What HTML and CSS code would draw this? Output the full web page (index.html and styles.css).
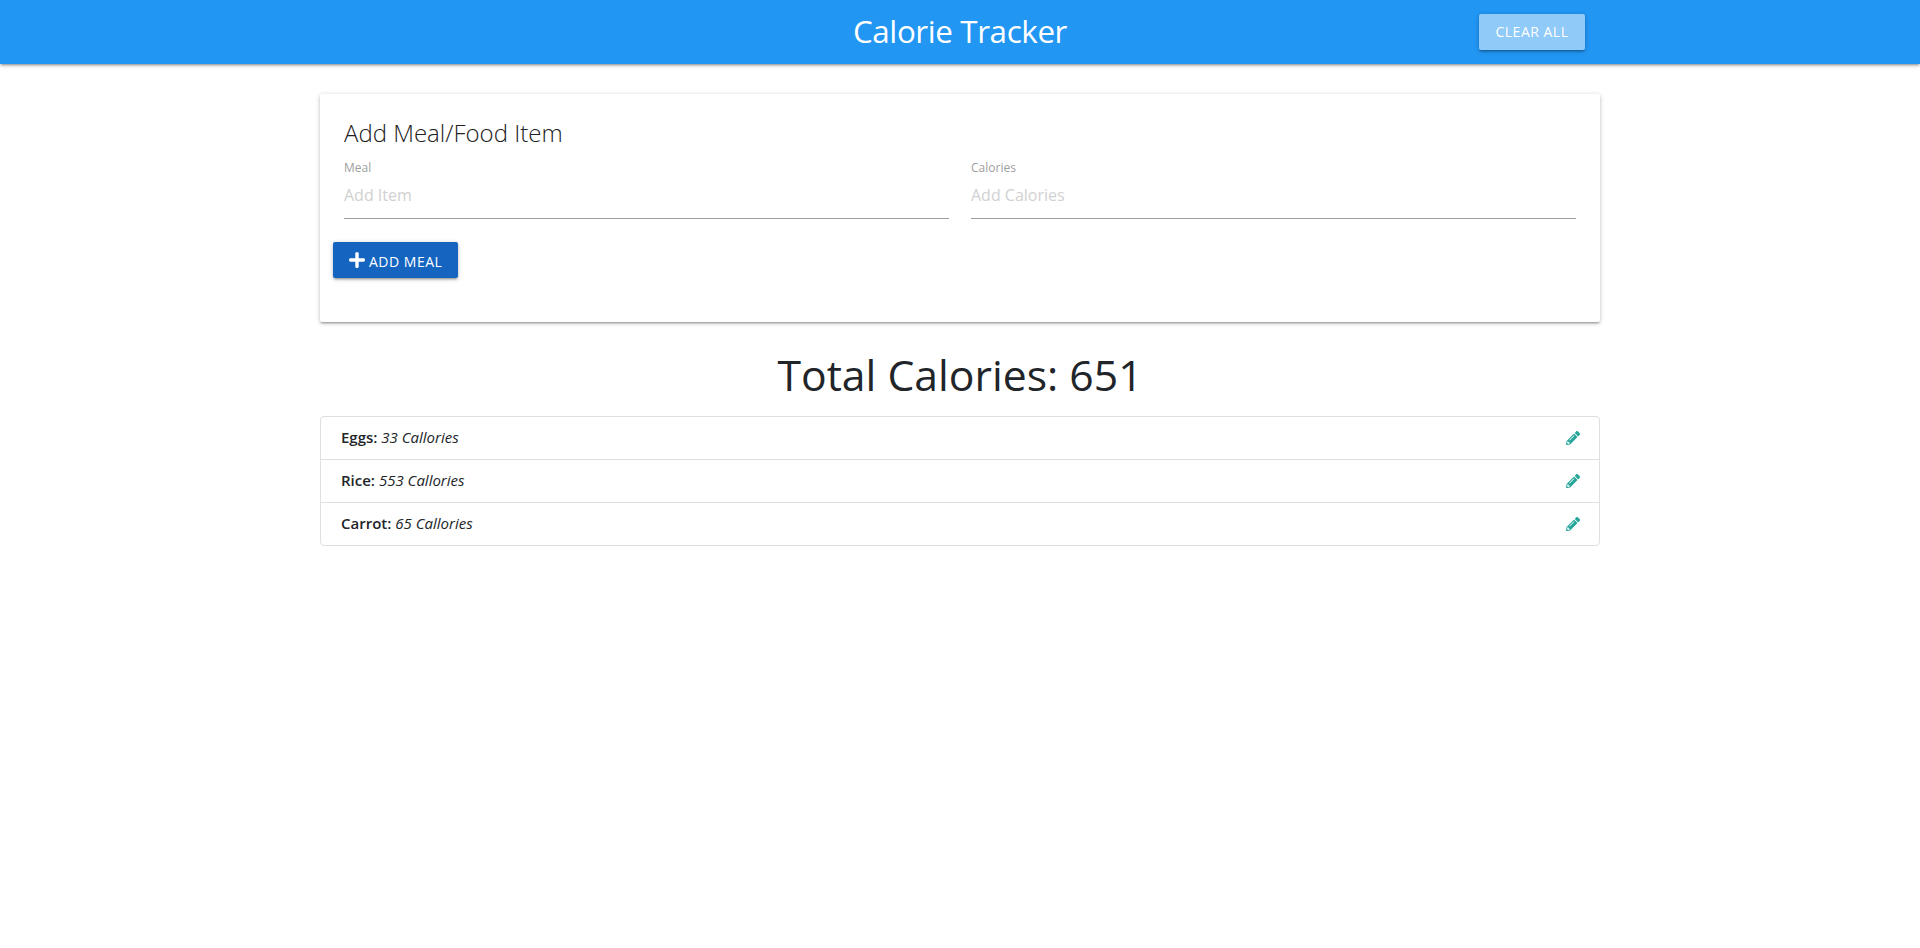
FILE: index.html
```html
<!DOCTYPE html>
<html lang="en">
<head>
<meta charset="utf-8">
<title>Calorie Tracker</title>
<link rel="stylesheet" href="styles.css">
</head>
<body>
<nav class="navbar">
  <div class="nav-inner">
    <span class="brand">Calorie Tracker</span>
    <button class="btn btn-clear">CLEAR ALL</button>
  </div>
</nav>
<main class="container">
  <section class="card">
    <h2 class="card-title">Add Meal/Food Item</h2>
    <form class="form-row">
      <div class="field">
        <label class="field-label">Meal</label>
        <input class="field-input" placeholder="Add Item">
      </div>
      <div class="field">
        <label class="field-label">Calories</label>
        <input class="field-input" placeholder="Add Calories">
      </div>
    </form>
    <button class="btn btn-add">
      <svg class="plus-icon" viewBox="0 0 448 512"><path d="M416 208H272V64c0-17.67-14.33-32-32-32h-32c-17.67 0-32 14.33-32 32v144H32c-17.67 0-32 14.33-32 32v32c0 17.67 14.33 32 32 32h144v144c0 17.67 14.33 32 32 32h32c17.67 0 32-14.33 32-32V304h144c17.67 0 32-14.33 32-32v-32c0-17.67-14.33-32-32-32z"/></svg>
      <span class="btn-label">ADD MEAL</span>
    </button>
  </section>
  <h1 class="total">Total Calories: 651</h1>
  <ul class="list">
    <li class="item"><span class="item-text"><strong>Eggs:</strong> <em>33 Callories</em></span>
      <svg class="edit-icon" viewBox="0 0 512 512"><path d="M497.9 142.1l-46.1 46.1c-4.7 4.7-12.3 4.7-17 0l-111-111c-4.7-4.7-4.7-12.3 0-17l46.1-46.1c18.7-18.7 49.1-18.7 67.9 0l60.1 60.1c18.8 18.7 18.8 49.1 0 67.9zM284.2 99.8L21.6 362.4.4 483.9c-2.9 16.4 11.4 30.6 27.8 27.8l121.5-21.3 262.6-262.6c4.7-4.7 4.7-12.3 0-17l-111-111c-4.8-4.7-12.4-4.7-17.1 0zM124.1 339.9c-5.5-5.5-5.5-14.3 0-19.8l154-154c5.5-5.5 14.3-5.5 19.8 0s5.5 14.3 0 19.8l-154 154c-5.5 5.5-14.3 5.5-19.8 0zM88 424h48v36.3l-64.5 11.3-31.1-31.1L51.7 376H88v48z"/></svg></li>
    <li class="item"><span class="item-text"><strong>Rice:</strong> <em>553 Callories</em></span>
      <svg class="edit-icon" viewBox="0 0 512 512"><path d="M497.9 142.1l-46.1 46.1c-4.7 4.7-12.3 4.7-17 0l-111-111c-4.7-4.7-4.7-12.3 0-17l46.1-46.1c18.7-18.7 49.1-18.7 67.9 0l60.1 60.1c18.8 18.7 18.8 49.1 0 67.9zM284.2 99.8L21.6 362.4.4 483.9c-2.9 16.4 11.4 30.6 27.8 27.8l121.5-21.3 262.6-262.6c4.7-4.7 4.7-12.3 0-17l-111-111c-4.8-4.7-12.4-4.7-17.1 0zM124.1 339.9c-5.5-5.5-5.5-14.3 0-19.8l154-154c5.5-5.5 14.3-5.5 19.8 0s5.5 14.3 0 19.8l-154 154c-5.5 5.5-14.3 5.5-19.8 0zM88 424h48v36.3l-64.5 11.3-31.1-31.1L51.7 376H88v48z"/></svg></li>
    <li class="item"><span class="item-text"><strong>Carrot:</strong> <em>65 Callories</em></span>
      <svg class="edit-icon" viewBox="0 0 512 512"><path d="M497.9 142.1l-46.1 46.1c-4.7 4.7-12.3 4.7-17 0l-111-111c-4.7-4.7-4.7-12.3 0-17l46.1-46.1c18.7-18.7 49.1-18.7 67.9 0l60.1 60.1c18.8 18.7 18.8 49.1 0 67.9zM284.2 99.8L21.6 362.4.4 483.9c-2.9 16.4 11.4 30.6 27.8 27.8l121.5-21.3 262.6-262.6c4.7-4.7 4.7-12.3 0-17l-111-111c-4.8-4.7-12.4-4.7-17.1 0zM124.1 339.9c-5.5-5.5-5.5-14.3 0-19.8l154-154c5.5-5.5 14.3-5.5 19.8 0s5.5 14.3 0 19.8l-154 154c-5.5 5.5-14.3 5.5-19.8 0zM88 424h48v36.3l-64.5 11.3-31.1-31.1L51.7 376H88v48z"/></svg></li>
  </ul>
</main>
</body>
</html>
```

FILE: styles.css
```css
* { box-sizing: border-box; }
body {
  margin: 0;
  background: #fff;
  color: #212529;
  font-family: "Open Sans", "Noto Sans", sans-serif;
}
.navbar {
  height: 64px;
  background: #2196f3;
  box-shadow: 0 2px 2px 0 rgba(0,0,0,.14), 0 3px 1px -2px rgba(0,0,0,.12), 0 1px 5px 0 rgba(0,0,0,.2);
}
.nav-inner {
  width: 1280px;
  height: 64px;
  margin: 0 auto;
  display: grid;
  grid-template-columns: 1fr auto 1fr;
  align-items: center;
}
.brand {
  grid-column: 2;
  color: #fff;
  font-size: 31.4px;
  font-weight: 400;
  letter-spacing: -.4px;
  padding-bottom: 3px;
}
.btn {
  display: inline-flex;
  align-items: center;
  height: 36px;
  border: 0;
  border-radius: 2px;
  color: #fff;
  font-family: inherit;
  font-size: 14px;
  letter-spacing: .5px;
  padding: 0 16px;
  box-shadow: 0 2px 2px 0 rgba(0,0,0,.14), 0 3px 1px -2px rgba(0,0,0,.12), 0 1px 5px 0 rgba(0,0,0,.2);
}
.btn-clear {
  grid-column: 3;
  justify-self: end;
  width: 106px;
  justify-content: center;
  padding: 0 0 1px;
  margin-right: 15px;
  background: #90caf9;
}
.btn-label { padding-top: 2px; }
.container {
  width: 1280px;
  margin: 30px auto 0;
}
.card {
  height: 228px;
  padding: 23px 24px 0;
  border-radius: 2px;
  background: #fff;
  box-shadow: 0 2px 2px 0 rgba(0,0,0,.14), 0 3px 1px -2px rgba(0,0,0,.12), 0 1px 5px 0 rgba(0,0,0,.2);
}
.card-title {
  margin: 0;
  font-size: 24px;
  line-height: 32px;
  font-weight: 300;
  color: #212121;
}
.form-row {
  display: grid;
  grid-template-columns: 1fr 1fr;
  column-gap: 22px;
  margin-top: 10px;
}
.field { display: flex; flex-direction: column; }
.field-label {
  font-size: 12px;
  line-height: 18px;
  color: #9e9e9e;
}
.field-input {
  height: 42px;
  border: 0;
  border-bottom: 1px solid #9e9e9e;
  outline: 0;
  padding: 0 0 6px;
  font-family: inherit;
  font-size: 16px;
  background: transparent;
}
.field-input::placeholder { color: #d1d1d1; opacity: 1; }
.btn-add {
  margin: 23px 0 0 -11px;
  background: #1565c0;
}
.plus-icon { width: 16px; height: 18px; fill: #fff; margin-right: 4px; }
.total {
  margin: 25px 0 13px;
  text-align: center;
  font-size: 42.7px;
  line-height: 56px;
  font-weight: 400;
  color: #212529;
}
.list {
  list-style: none;
  margin: 0;
  padding: 0;
  border: 1px solid #dfdfdf;
  border-radius: 4px;
}
.item {
  height: 43px;
  display: flex;
  align-items: center;
  justify-content: space-between;
  padding: 0 19px 0 20px;
  font-size: 15px;
  border-bottom: 1px solid #dfdfdf;
}
.item:last-child { border-bottom: 0; height: 42px; }
.item-text { padding-bottom: 2px; }
.item strong { font-weight: 600; }
.edit-icon { width: 14px; height: 14px; fill: #26a69a; }
```
